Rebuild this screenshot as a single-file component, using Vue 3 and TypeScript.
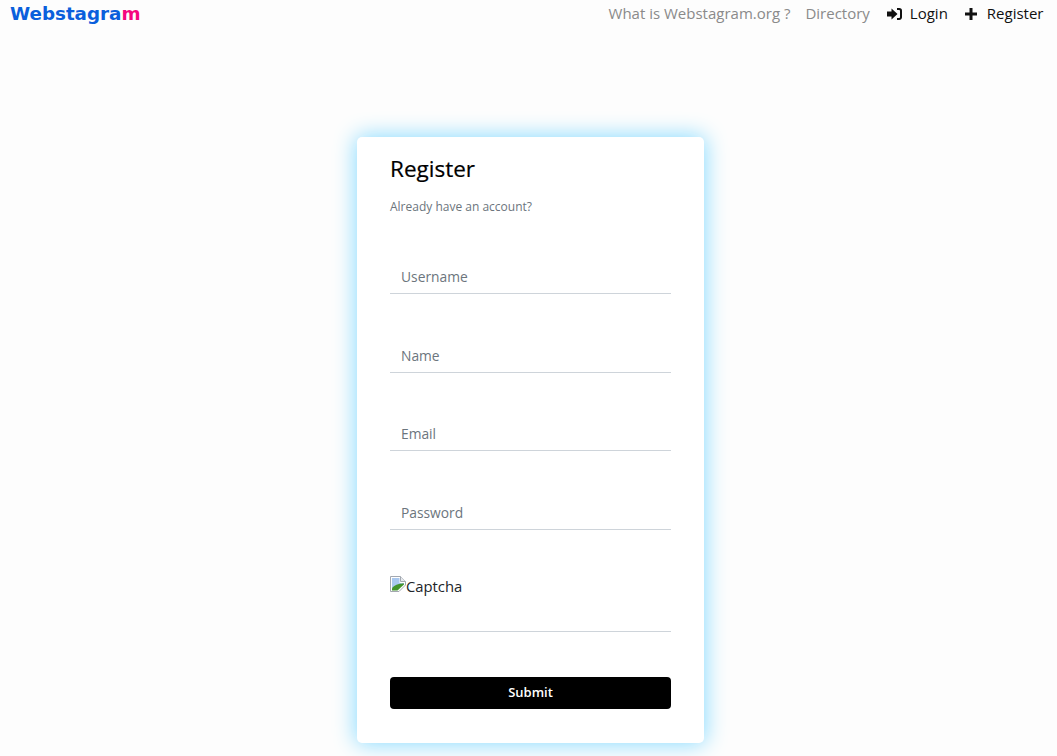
<template>
  <div class="page">
    <header class="topbar">
      <a class="logo">Webstagra<span class="logo-end">m</span></a>
      <nav class="nav">
        <a class="nav-link">What is Webstagram.org ?</a>
        <a class="nav-link">Directory</a>
        <a class="nav-link is-dark">
          <svg class="nav-icon login-icon" viewBox="0 0 15 12" width="15" height="12">
            <path d="M0 3.500h4.500V.5L10.500 6l-6 5.500v-3H0z" fill="#111" />
            <path d="M10 1h2.200A1.800 1.800 0 0 1 14 2.800v6.400A1.800 1.800 0 0 1 12.200 11H10" fill="none" stroke="#111" stroke-width="2" />
          </svg>
          Login
        </a>
        <a class="nav-link is-dark">
          <svg class="nav-icon" viewBox="0 0 12 12" width="12" height="12">
            <path d="M4.500 0h3v4.500H12v3H7.500V12h-3V7.500H0v-3h4.500z" fill="#111" />
          </svg>
          Register
        </a>
      </nav>
    </header>

    <main class="main">
      <form class="card" @submit.prevent>
        <h1 class="title">Register</h1>
        <p class="subtitle">Already have an account?</p>

        <div v-for="field in fields" :key="field" class="field">
          <input class="input" type="text" :placeholder="field" />
        </div>

        <div class="captcha">
          <span class="captcha-img">
            <svg viewBox="0 0 16 16" width="16" height="16">
              <path d="M.5.5h10l5 5v3.500L9 15.500H.5z" fill="#fff" stroke="#a3a8b0" />
              <path d="M10.500.5v5h5" fill="#e6e9ed" stroke="#a3a8b0" />
              <path d="M2 2h7.500v5H14v1L2 13.500z" fill="#a9c8ef" />
              <path d="M2 14.500v-2C4 9 8 7.500 14 7.500v1L7.500 14.500z" fill="#43942c" />
            </svg>Captcha
          </span>
        </div>

        <button class="submit" type="submit">Submit</button>
      </form>
    </main>
  </div>
</template>

<script setup lang="ts">
const fields: string[] = ['Username', 'Name', 'Email', 'Password']
</script>

<style>
html,
body {
  margin: 0;
  background: #fdfdfd;
}
</style>

<style scoped>
.page {
  height: 756px;
  overflow: hidden;
  font-family: "Open Sans", sans-serif;
  background: #fdfdfd;
}

.topbar {
  display: flex;
  justify-content: space-between;
  align-items: flex-start;
  height: 27px;
  padding: 0 13.500px 0 10px;
}

.logo {
  font-family: "DejaVu Sans", sans-serif;
  font-weight: 700;
  font-size: 18.3px;
  line-height: 27px;
  color: #0a5fdc;
}

.logo-end {
  color: #f5067f;
}

.nav {
  display: flex;
  gap: 15px;
}

.nav-link {
  display: flex;
  align-items: center;
  font-size: 15px;
  line-height: 27px;
  color: #8a8a8a;
}

.nav-link.is-dark {
  margin-left: 2px;
  color: #111;
}

.nav-icon {
  margin-right: 10px;
}

.login-icon {
  margin-right: 8px;
}

.main {
  display: flex;
  justify-content: center;
  padding: 110px 0 0 4px;
}

.card {
  box-sizing: border-box;
  width: 347px;
  height: 606px;
  padding: 0 33px;
  background: #fff;
  border-radius: 5px;
  box-shadow: 0 0 22px 1px #86daff;
}

.title {
  margin: 0;
  padding-top: 16px;
  font-size: 22.5px;
  line-height: 32px;
  font-weight: 400;
  -webkit-text-stroke: 0.2px #000;
  color: #000;
}

.subtitle {
  margin: 14px 0 0;
  font-size: 12px;
  line-height: 16px;
  color: #6c757d;
}

.field {
  height: 78.500px;
  display: flex;
  align-items: flex-end;
}

.field:first-of-type {
  height: 79px;
}

.input {
  box-sizing: border-box;
  width: 100%;
  height: 34px;
  padding: 0 11px;
  border: 0;
  border-bottom: 1px solid #ced4da;
  background: transparent;
  outline: 0;
  font-family: inherit;
  font-size: 13.8px;
  color: #495057;
}

.input::placeholder {
  color: #6c757d;
  opacity: 1;
}

.captcha {
  height: 102px;
  box-sizing: border-box;
  padding-top: 46px;
  border-bottom: 1px solid #ced4da;
}

.captcha-img {
  display: block;
  font-size: 14.800px;
  line-height: 19px;
  color: #212529;
}

.submit {
  display: block;
  width: 100%;
  height: 32px;
  margin-top: 45px;
  padding: 0 0 2px;
  border: 0;
  border-radius: 4px;
  background: #000;
  color: #fff;
  font-family: inherit;
  font-size: 13px;
  font-weight: 600;
}
</style>
